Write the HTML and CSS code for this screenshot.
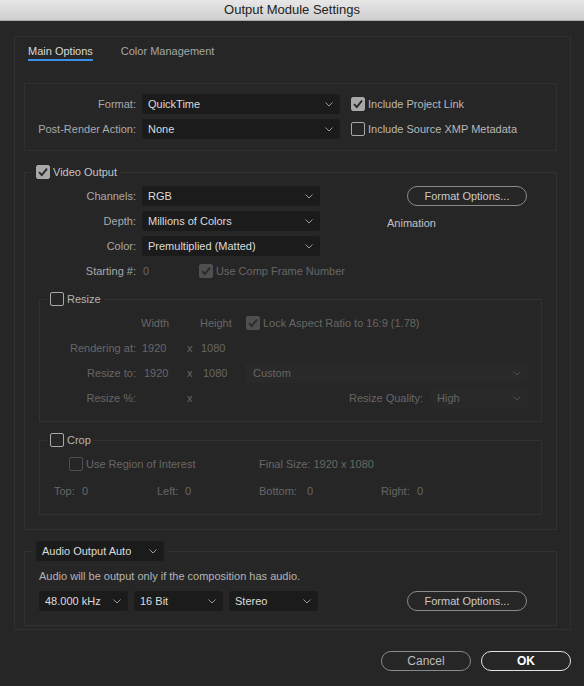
FILE: index.html
```html
<!DOCTYPE html>
<html lang="en">
<head>
  <meta charset="UTF-8">
  <title>Output Module Settings</title>
  <link rel="stylesheet" href="styles.css">
</head>
<body>
  <div class="titlebar">Output Module Settings</div>
  <div class="dialog">
    <div class="panel">
      <div class="tabs">
        <span class="tab active">Main Options</span>
        <span class="tab">Color Management</span>
      </div>

      <!-- Format -->
      <div class="box">
        <div class="row">
          <span class="label">Format:</span>
          <div class="select w-main"><span>QuickTime</span><svg viewBox="0 0 8 5"><path d="M0.5 0.5 L4 4 L7.5 0.5"/></svg></div>
          <span class="check gap-main"><span class="cb on"><svg viewBox="0 0 14 14"><path d="M3 7.2 L5.8 10 L11 3.6"/></svg></span>Include Project Link</span>
        </div>
        <div class="row">
          <span class="label">Post-Render Action:</span>
          <div class="select w-main"><span>None</span><svg viewBox="0 0 8 5"><path d="M0.5 0.5 L4 4 L7.5 0.5"/></svg></div>
          <span class="check gap-main"><span class="cb"></span>Include Source XMP Metadata</span>
        </div>
      </div>

      <!-- Video -->
      <fieldset class="group video">
        <legend><span class="cb on"><svg viewBox="0 0 14 14"><path d="M3 7.2 L5.8 10 L11 3.6"/></svg></span>Video Output</legend>
        <div class="video-body">
          <div class="row">
            <span class="label">Channels:</span>
            <div class="select w-video"><span>RGB</span><svg viewBox="0 0 8 5"><path d="M0.5 0.5 L4 4 L7.5 0.5"/></svg></div>
            <button class="btn pill opt-video">Format Options...</button>
          </div>
          <div class="row">
            <span class="label">Depth:</span>
            <div class="select w-video"><span>Millions of Colors</span><svg viewBox="0 0 8 5"><path d="M0.5 0.5 L4 4 L7.5 0.5"/></svg></div>
            <span class="codec">Animation</span>
          </div>
          <div class="row">
            <span class="label">Color:</span>
            <div class="select w-video"><span>Premultiplied (Matted)</span><svg viewBox="0 0 8 5"><path d="M0.5 0.5 L4 4 L7.5 0.5"/></svg></div>
          </div>
          <div class="row">
            <span class="label">Starting #:</span>
            <span class="off start-val">0</span>
            <span class="check off"><span class="cb on dim"><svg viewBox="0 0 14 14"><path d="M3 7.2 L5.8 10 L11 3.6"/></svg></span>Use Comp Frame Number</span>
          </div>

          <fieldset class="group sub">
            <legend><span class="cb"></span>Resize</legend>
            <div class="sub-body">
              <div class="row off">
                <span class="head-gap"></span>
                <span class="head-w">Width</span>
                <span class="head-h">Height</span>
                <span class="check"><span class="cb on dim"><svg viewBox="0 0 14 14"><path d="M3 7.2 L5.8 10 L11 3.6"/></svg></span>Lock Aspect Ratio to 16:9 (1.78)</span>
              </div>
              <div class="row off">
                <span class="label r-label">Rendering at:</span>
                <span class="val">1920</span>
                <span class="times">x</span>
                <span class="val2">1080</span>
              </div>
              <div class="row off">
                <span class="label r-label">Resize to:</span>
                <span class="val field">1920</span>
                <span class="times">x</span>
                <span class="val2 field">1080</span>
                <div class="select dim grow"><span>Custom</span><svg viewBox="0 0 8 5"><path d="M0.5 0.5 L4 4 L7.5 0.5"/></svg></div>
              </div>
              <div class="row off">
                <span class="label r-label">Resize %:</span>
                <span class="val"></span>
                <span class="times">x</span>
                <span class="quality-label">Resize Quality:</span>
                <div class="select dim w-quality"><span>High</span><svg viewBox="0 0 8 5"><path d="M0.5 0.5 L4 4 L7.5 0.5"/></svg></div>
              </div>
            </div>
          </fieldset>

          <fieldset class="group sub">
            <legend><span class="cb"></span>Crop</legend>
            <div class="sub-body crop-body">
              <div class="row off">
                <span class="check roi"><span class="cb dim"></span>Use Region of Interest</span>
                <span>Final Size: 1920 x 1080</span>
              </div>
              <div class="row off edges">
                <span class="edge e1"><span class="edge-label">Top:</span>0</span>
                <span class="edge e2"><span class="edge-label">Left:</span>0</span>
                <span class="edge e3"><span class="edge-label wide">Bottom:</span>0</span>
                <span class="edge"><span class="edge-label mid">Right:</span>0</span>
              </div>
            </div>
          </fieldset>
        </div>
      </fieldset>

      <!-- Audio -->
      <fieldset class="group audio">
        <legend><div class="select w-audio"><span>Audio Output Auto</span><svg viewBox="0 0 8 5"><path d="M0.5 0.5 L4 4 L7.5 0.5"/></svg></div></legend>
        <div class="audio-body">
          <p class="note">Audio will be output only if the composition has audio.</p>
          <div class="row">
            <div class="select w-small"><span>48.000 kHz</span><svg viewBox="0 0 8 5"><path d="M0.5 0.5 L4 4 L7.5 0.5"/></svg></div>
            <div class="select w-small"><span>16 Bit</span><svg viewBox="0 0 8 5"><path d="M0.5 0.5 L4 4 L7.5 0.5"/></svg></div>
            <div class="select w-small"><span>Stereo</span><svg viewBox="0 0 8 5"><path d="M0.5 0.5 L4 4 L7.5 0.5"/></svg></div>
            <button class="btn pill opt-audio">Format Options...</button>
          </div>
        </div>
      </fieldset>
    </div>

    <div class="actions">
      <button class="btn action">Cancel</button>
      <button class="btn action primary">OK</button>
    </div>
  </div>
</body>
</html>
```

FILE: styles.css
```css
/* General */
* {
  box-sizing: border-box;
}
body {
  margin: 0;
  background: #262626;
  font-family: "Liberation Sans", Arial, sans-serif;
  font-size: 11px;
  color: #a9a9a9;
}
.titlebar {
  height: 21px;
  line-height: 20px;
  text-align: center;
  font-size: 13px;
  color: #222;
  background: linear-gradient(#e7e7e7, #cfcfcf);
  border-bottom: 1px solid #a8a8a8;
}
.dialog {
  padding: 15px 13px 0 14px;
}
.panel {
  border: 1px solid #303030;
  padding: 0 13px 3px 9px;
}

/* Tabs */
.tabs {
  display: flex;
  gap: 28px;
  margin: 0 0 22px 4px;
}
.tab {
  padding: 7px 0 1px;
  line-height: 14px;
  border-bottom: 2px solid transparent;
  color: #a6a6a6;
}
.tab.active {
  color: #dadada;
  border-bottom-color: #3a8fe6;
}

/* Rows and controls */
.row {
  display: flex;
  align-items: center;
  height: 20px;
}
.row + .row {
  margin-top: 5px;
}
.label {
  width: 111px;
  flex-shrink: 0;
  text-align: right;
  margin-right: 6px;
}
.select {
  display: flex;
  align-items: center;
  justify-content: space-between;
  height: 20px;
  padding: 0 7px 0 6px;
  background: #1b1b1b;
  border-radius: 3px;
  color: #dcdcdc;
}
.select svg {
  width: 8px;
  height: 5px;
  fill: none;
  stroke: #9a9a9a;
  stroke-width: 1;
}
.select.dim {
  background: #292929;
  color: #666;
}
.select.dim svg {
  stroke: #4e4e4e;
}
.w-main { width: 198px; }
.w-video { width: 178px; }
.w-quality { width: 97px; }
.w-audio { width: 128px; }
.w-small { width: 89px; }
.grow { flex-grow: 1; padding-left: 8px; }

.check {
  display: flex;
  align-items: center;
  gap: 3px;
  color: #b8b8b8;
}
.gap-main {
  margin-left: 11px;
}
.cb {
  display: inline-flex;
  width: 14px;
  height: 14px;
  border: 1.5px solid #a8a8a8;
  border-radius: 2px;
  flex-shrink: 0;
}
.cb.on {
  background: #a8a8a8;
  border-color: #a8a8a8;
}
.cb.dim {
  border-color: #4f4f4f;
}
.cb.on.dim {
  background: #4f4f4f;
}
.cb svg {
  width: 100%;
  height: 100%;
  margin: -1.5px;
  width: 14px;
  height: 14px;
  fill: none;
  stroke: #2a2a2a;
  stroke-width: 1.9;
}
.off,
.off .check,
.off .label {
  color: #666;
}

.btn {
  font: inherit;
  background: transparent;
  cursor: pointer;
  height: 20px;
  border-radius: 10px;
  padding: 0;
}
.pill {
  width: 120px;
  border: 1.5px solid #8a8a8a;
  color: #c9c9c9;
}

/* Groups */
.box {
  border: 1px solid #303030;
  padding: 10px 0 11px;
}
.group {
  margin: 0;
  padding: 0;
  min-width: 0;
  border: 1px solid #313131;
}
.group > legend {
  display: flex;
  align-items: center;
  gap: 3px;
  height: 16px;
  padding: 0 3px;
  margin-left: 8px;
  color: #c4c4c4;
}
.video {
  margin-top: 13px;
}
.video-body {
  padding: 6px 0 14px;
}
.opt-video {
  margin-left: 87px;
}
.codec {
  margin-left: 67px;
  padding-top: 3px;
  color: #c2c2c2;
}
.start-val {
  width: 57px;
  padding-left: 1px;
}

/* Resize / Crop */
.sub {
  margin: 10px 14px 0;
}
.sub > legend {
  margin-left: 7px;
  color: #b5b5b5;
}
.sub-body {
  padding: 6px 13px 13px 0;
}
.head-gap { width: 101px; }
.head-w { width: 59px; }
.head-h { width: 46px; }
.r-label {
  width: 96px;
}
.val { width: 45px; }
.val2 { width: 44px; }
.times { width: 14px; }
.field { padding-left: 2px; }
.quality-label {
  margin-left: auto;
  margin-right: 8px;
}

.crop-body .row + .row {
  margin-top: 7px;
}
.roi {
  width: 190px;
  margin-left: 29px;
}
.edges {
  padding-left: 14px;
}
.edge {
  display: flex;
}
.e1 { width: 103px; }
.e2 { width: 102px; }
.e3 { width: 122px; }
.edge-label { width: 28px; }
.edge-label.wide { width: 48px; }
.edge-label.mid { width: 36px; }

/* Audio */
.audio {
  margin-top: 11px;
}
.audio > legend {
  height: 20px;
}
.audio-body {
  padding: 8px 0 14px 14px;
}
.note {
  margin: 0 0 8px;
  line-height: 14px;
  color: #b4b4b4;
}
.audio-body .row {
  gap: 6px;
}
.opt-audio {
  margin-left: 83px;
}

/* Bottom buttons */
.actions {
  display: flex;
  justify-content: flex-end;
  gap: 10px;
  margin-top: 21px;
}
.action {
  width: 90px;
  border: 1.5px solid #8a8a8a;
  color: #bdbdbd;
  font-size: 12px;
}
.action.primary {
  border-color: #e2e2e2;
  color: #fff;
  font-weight: bold;
}
```
